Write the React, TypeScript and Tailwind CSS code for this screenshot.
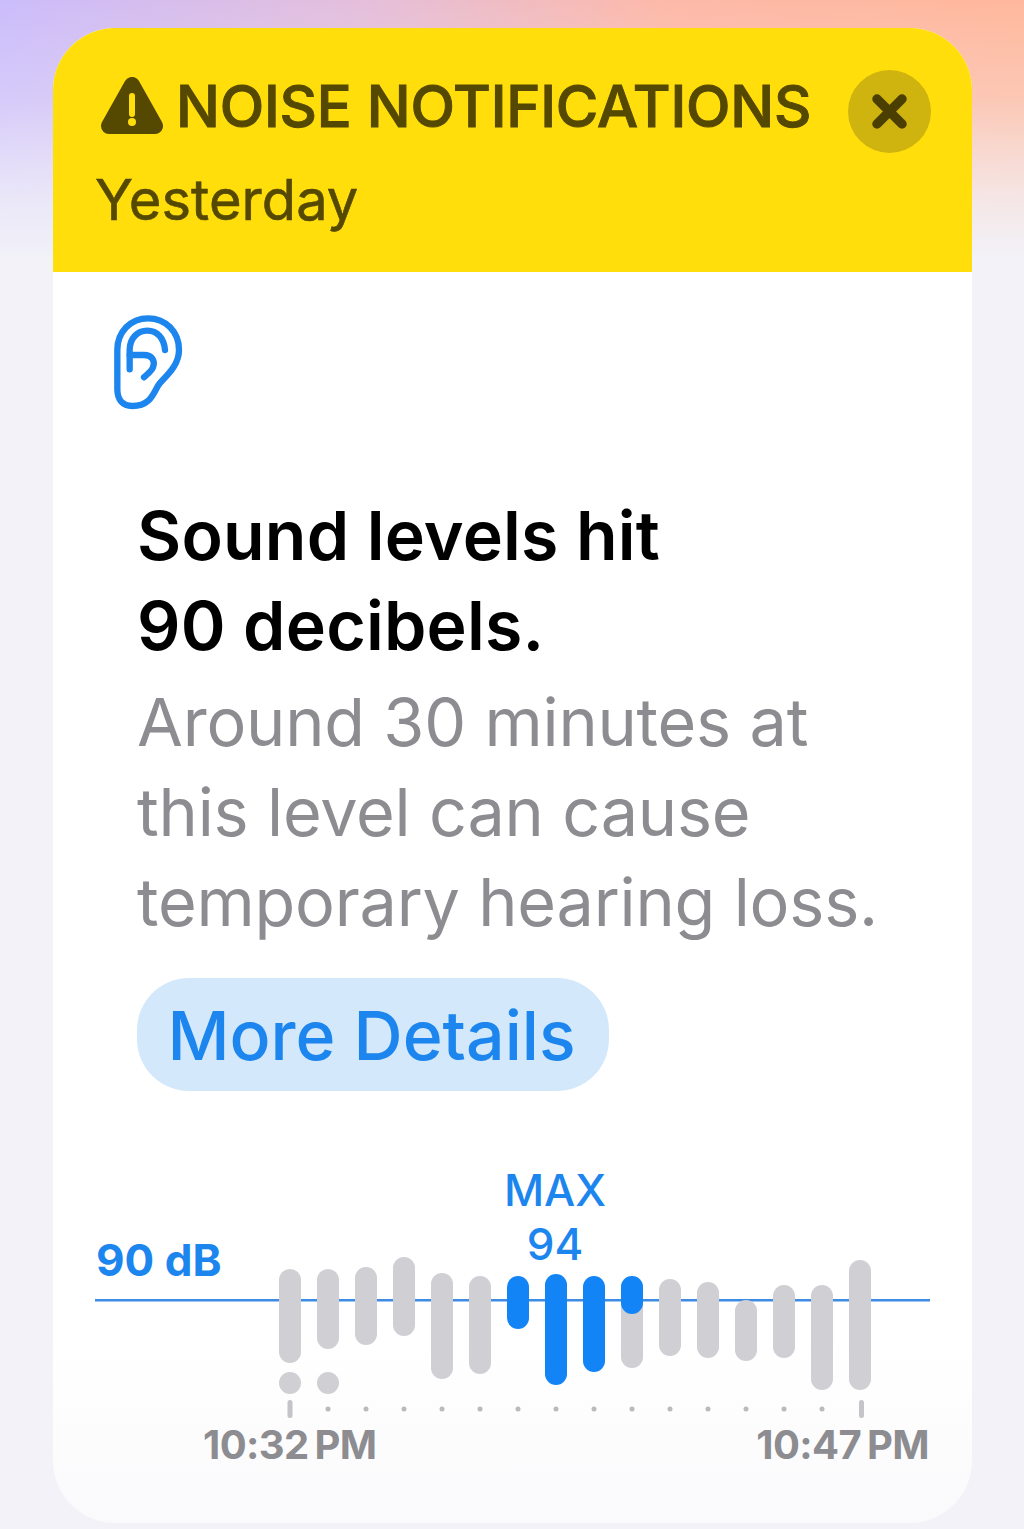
const font = { fontFamily: "Inter, 'Noto Sans', sans-serif" };

type Bar = { x: number; y1: number; y2: number; blue?: boolean };
const bars: Bar[] = [
  { x: 290, y1: 1269, y2: 1363 },
  { x: 328, y1: 1269, y2: 1349 },
  { x: 366, y1: 1267, y2: 1345 },
  { x: 404, y1: 1257, y2: 1336 },
  { x: 442, y1: 1273, y2: 1379 },
  { x: 480, y1: 1276, y2: 1374 },
  { x: 518, y1: 1276, y2: 1329, blue: true },
  { x: 556, y1: 1274, y2: 1385, blue: true },
  { x: 594, y1: 1276, y2: 1372, blue: true },
  { x: 632, y1: 1276, y2: 1368 },
  { x: 632, y1: 1276, y2: 1314, blue: true },
  { x: 670, y1: 1279, y2: 1356 },
  { x: 708, y1: 1282, y2: 1358 },
  { x: 746, y1: 1300, y2: 1361 },
  { x: 784, y1: 1285, y2: 1358 },
  { x: 822, y1: 1285, y2: 1390 },
  { x: 860, y1: 1260, y2: 1390 },
];
const ticks = [328, 366, 404, 442, 480, 518, 556, 594, 632, 670, 708, 746, 784, 822];

function Warning() {
  return (
    <svg width="64" height="58" viewBox="0 0 64 58" className="shrink-0 mt-[-11px]">
      <path d="M32 8 L55 49 L9 49 Z" fill="#554800" stroke="#554800" strokeWidth="16" strokeLinejoin="round" />
      <rect x="29" y="16" width="6" height="24" rx="3" fill="#ffde0b" />
      <circle cx="32" cy="45" r="4" fill="#ffde0b" />
    </svg>
  );
}

function Ear() {
  return (
    <svg width="120" height="120" viewBox="0 0 360 360" fill="none" stroke="#1c86ee" strokeWidth="19" strokeLinecap="round" strokeLinejoin="round">
      <path d="M85 150 C85 95 125 55 177 55 C230 55 270 95 270 150 C270 195 235 225 212 250 C195 270 190 318 130 318 C100 318 85 298 85 268 Z" />
      <path d="M122 208 V150 C122 115 145 92 175 92 C205 92 225 115 228 150" />
      <path d="M122 165 H165 C188 165 200 182 192 202 C187 214 175 222 165 232" />
    </svg>
  );
}

export default function App() {
  return (
    <div
      className="w-full h-[1529px] pt-[28px] overflow-hidden bg-[linear-gradient(180deg,rgba(242,242,248,0)_0px,rgba(242,242,248,0.27)_100px,rgba(242,242,248,0.55)_150px,rgba(242,242,248,0.8)_200px,#f2f2f8_260px),linear-gradient(90deg,#cbbcfb_0%,#e4bfdc_35%,#fdb9a8_65%,#ffb89c_100%)]"
      style={font}
    >
      <div className="ml-[53px] w-[919px] h-[1495px] rounded-[62px] overflow-hidden bg-[linear-gradient(180deg,#ffffff_88%,#fafafc_100%)]">
        <div className="h-[244px] bg-[#ffde0b] text-[#554800] pl-[47px] pr-[41px]">
          <div className="flex items-center pt-[42px] h-[125px]">
            <Warning />
            <span className="ml-[12px] mt-[-11px] text-[58px] leading-[70px] font-medium tracking-[-0.2px] whitespace-nowrap [-webkit-text-stroke:1px_#554800]">NOISE NOTIFICATIONS</span>
            <div className="ml-auto w-[83px] h-[83px] rounded-full bg-[#cfb40f] flex items-center justify-center shrink-0">
              <svg width="35" height="35" viewBox="0 0 35 35" fill="none" stroke="#4a3f00" strokeWidth="9.5" strokeLinecap="round">
                <path d="M5 5 L30 30 M30 5 L5 30" />
              </svg>
            </div>
          </div>
          <div className="text-[56px] leading-[70px] mt-[12px] ml-[-5px] tracking-[0.05px] [-webkit-text-stroke:0.6px_#554800]">Yesterday</div>
        </div>

        <div className="pt-[28px]">
          <div className="ml-[36px] h-[110px]">
            <Ear />
          </div>
          <div className="ml-[84px] mt-[80px]">
            <div className="text-[68px] leading-[90px] font-semibold text-black tracking-[0.2px]">
              Sound levels hit
              <br />
              90 decibels.
            </div>
            <div className="mt-[7px] text-[66.5px] leading-[90px] text-[#8c8c91] tracking-[-0.2px] whitespace-nowrap">
              Around 30 minutes at
              <br />
              this level can cause
              <br />
              temporary hearing loss.
            </div>
            <div className="mt-[31px] w-[472px] h-[113px] rounded-[52px] bg-[#d3e8fb] text-[#1c86ee] flex items-center justify-center text-[68px] font-medium">
              <span className="ml-[-3px]">More Details</span>
            </div>
          </div>

          <div className="ml-[42px] mt-[72px] w-[835px] text-[#1c86ee]">
            <div className="flex h-[97px]">
              <span className="w-[400px] mt-[71px] ml-[1px] text-[44px] leading-[52px] font-bold">90 dB</span>
              <div className="w-[120px] ml-[-1px] text-center text-[44px] leading-[54px] font-medium">
                MAX
                <br />
                94
              </div>
            </div>
            <svg width="835" height="170" viewBox="95 1250 835 170" className="block mt-[-10px]">
              <rect x="95" y="1299" width="835" height="2.5" fill="#3d8be3" />
              {bars.map((b, i) => (
                <rect key={i} x={b.x - 11} y={b.y1} width="22" height={b.y2 - b.y1} rx="11" fill={b.blue ? "#1384f5" : "#cfcfd4"} />
              ))}
              <circle cx="290" cy="1383" r="11" fill="#cfcfd4" />
              <circle cx="328" cy="1383" r="11" fill="#cfcfd4" />
              {ticks.map((x) => (
                <circle key={x} cx={x} cy="1409" r="2.5" fill="#b9b9be" />
              ))}
              <rect x="287.5" y="1400" width="5" height="18" rx="2.5" fill="#c4c4c9" />
              <rect x="859" y="1400" width="5" height="18" rx="2.5" fill="#c4c4c9" />
            </svg>
            <div className="flex justify-between pl-[108px] pr-[1px] mt-[2px] text-[40px] leading-[46px] font-bold text-[#8c8c91] tracking-[-0.6px] [word-spacing:-3px]">
              <span>10:32 PM</span>
              <span>10:47 PM</span>
            </div>
          </div>
        </div>
      </div>
    </div>
  );
}
